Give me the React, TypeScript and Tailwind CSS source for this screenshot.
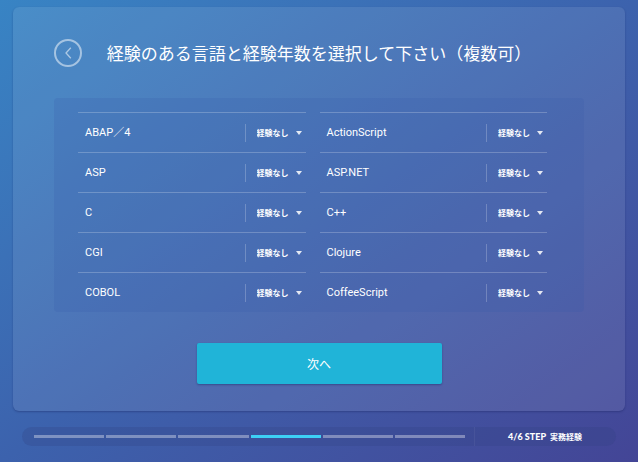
const LANGUAGES = [
  "ABAP／4",
  "ActionScript",
  "ASP",
  "ASP.NET",
  "C",
  "C++",
  "CGI",
  "Clojure",
  "COBOL",
  "CoffeeScript",
];

const YEARS = ["経験なし", "1年未満", "1〜3年", "3〜5年", "5年以上"];

const STEPS = [1, 2, 3, 4, 5, 6];
const CURRENT_STEP = 4;

export default function App() {
  return (
    <div className="flex min-h-screen flex-col bg-linear-to-br from-[#3884c4] via-[#3c62ad] to-[#434596] px-[13px] pt-[7px] pb-4 font-['Noto_Sans_CJK_JP',sans-serif] text-white">
      <main className="flex grow flex-col rounded-md bg-white/9 px-[41px] pb-[27px] shadow-[0_1px_2px_rgba(20,30,90,0.35)]">
        <header className="relative flex h-[91px] items-center justify-center">
          <BackButton />
          <h1 className="text-[17px] leading-6 font-normal whitespace-nowrap">
            経験のある言語と経験年数を選択して下さい（複数可）
          </h1>
        </header>

        {/* Language list */}
        <div className="rounded-sm bg-[#3658ac]/20 pt-[14px] pr-[37px] pl-6">
          <div className="grid grid-cols-2 gap-x-[14px]">
            {LANGUAGES.map((name) => (
              <LanguageRow key={name} name={name} />
            ))}
          </div>
        </div>

        <button
          type="button"
          className="mx-auto mt-[31px] h-[41px] w-[245px] rounded-xs bg-[#20b4d8] text-xs shadow-[0_1px_2px_rgba(20,30,90,0.4)]"
        >
          次へ
        </button>
      </main>

      <StepBar />
    </div>
  );
}

function BackButton() {
  return (
    <button
      type="button"
      aria-label="戻る"
      className="absolute left-0 flex size-7 items-center justify-center rounded-full border-2 border-white/50"
    >
      <svg viewBox="0 0 7 12" className="h-3 w-[7px]" fill="none" stroke="white" strokeOpacity="0.55" strokeWidth="1.3">
        <path d="M5.8.8 1 6l4.8 5.2" />
      </svg>
    </button>
  );
}

function LanguageRow({ name }: { name: string }) {
  const id = `years-${name}`;
  return (
    <div className="flex h-10 items-center border-t border-white/22 pl-[7px]">
      <label htmlFor={id} className="grow font-['Roboto','Noto_Sans_CJK_JP',sans-serif] text-[11px] leading-4">
        {name}
      </label>
      <div className="relative flex h-[18px] w-[61px] items-center border-l border-white/22 pl-[11px]">
        <select id={id} className="w-full appearance-none bg-transparent text-[8px] leading-4 font-bold outline-none">
          {YEARS.map((year) => (
            <option key={year} className="text-gray-800">
              {year}
            </option>
          ))}
        </select>
        <svg viewBox="0 0 6 4" className="pointer-events-none absolute right-1 h-1 w-1.5" fill="white" fillOpacity="0.85">
          <path d="M0 0h6L3 4z" />
        </svg>
      </div>
    </div>
  );
}

function StepBar() {
  return (
    <footer className="mx-[9px] mt-4 flex h-[19px] items-center rounded-full bg-[#30407f]/25">
      <div className="flex h-full grow items-center gap-0.5 border-r border-white/5 pr-[9px] pl-3">
        {STEPS.map((step) => (
          <span
            key={step}
            className={`h-[3px] grow ${step === CURRENT_STEP ? "bg-[#3dd0f5]" : "bg-white/35"}`}
          />
        ))}
      </div>
      <p className="flex w-[141px] items-center gap-1 pl-[33px] text-[8px] leading-3 font-bold whitespace-nowrap">
        <span className="font-['Lato',sans-serif] text-[9px] font-black">{CURRENT_STEP}/{STEPS.length} STEP</span>
        <span>実務経験</span>
      </p>
    </footer>
  );
}
